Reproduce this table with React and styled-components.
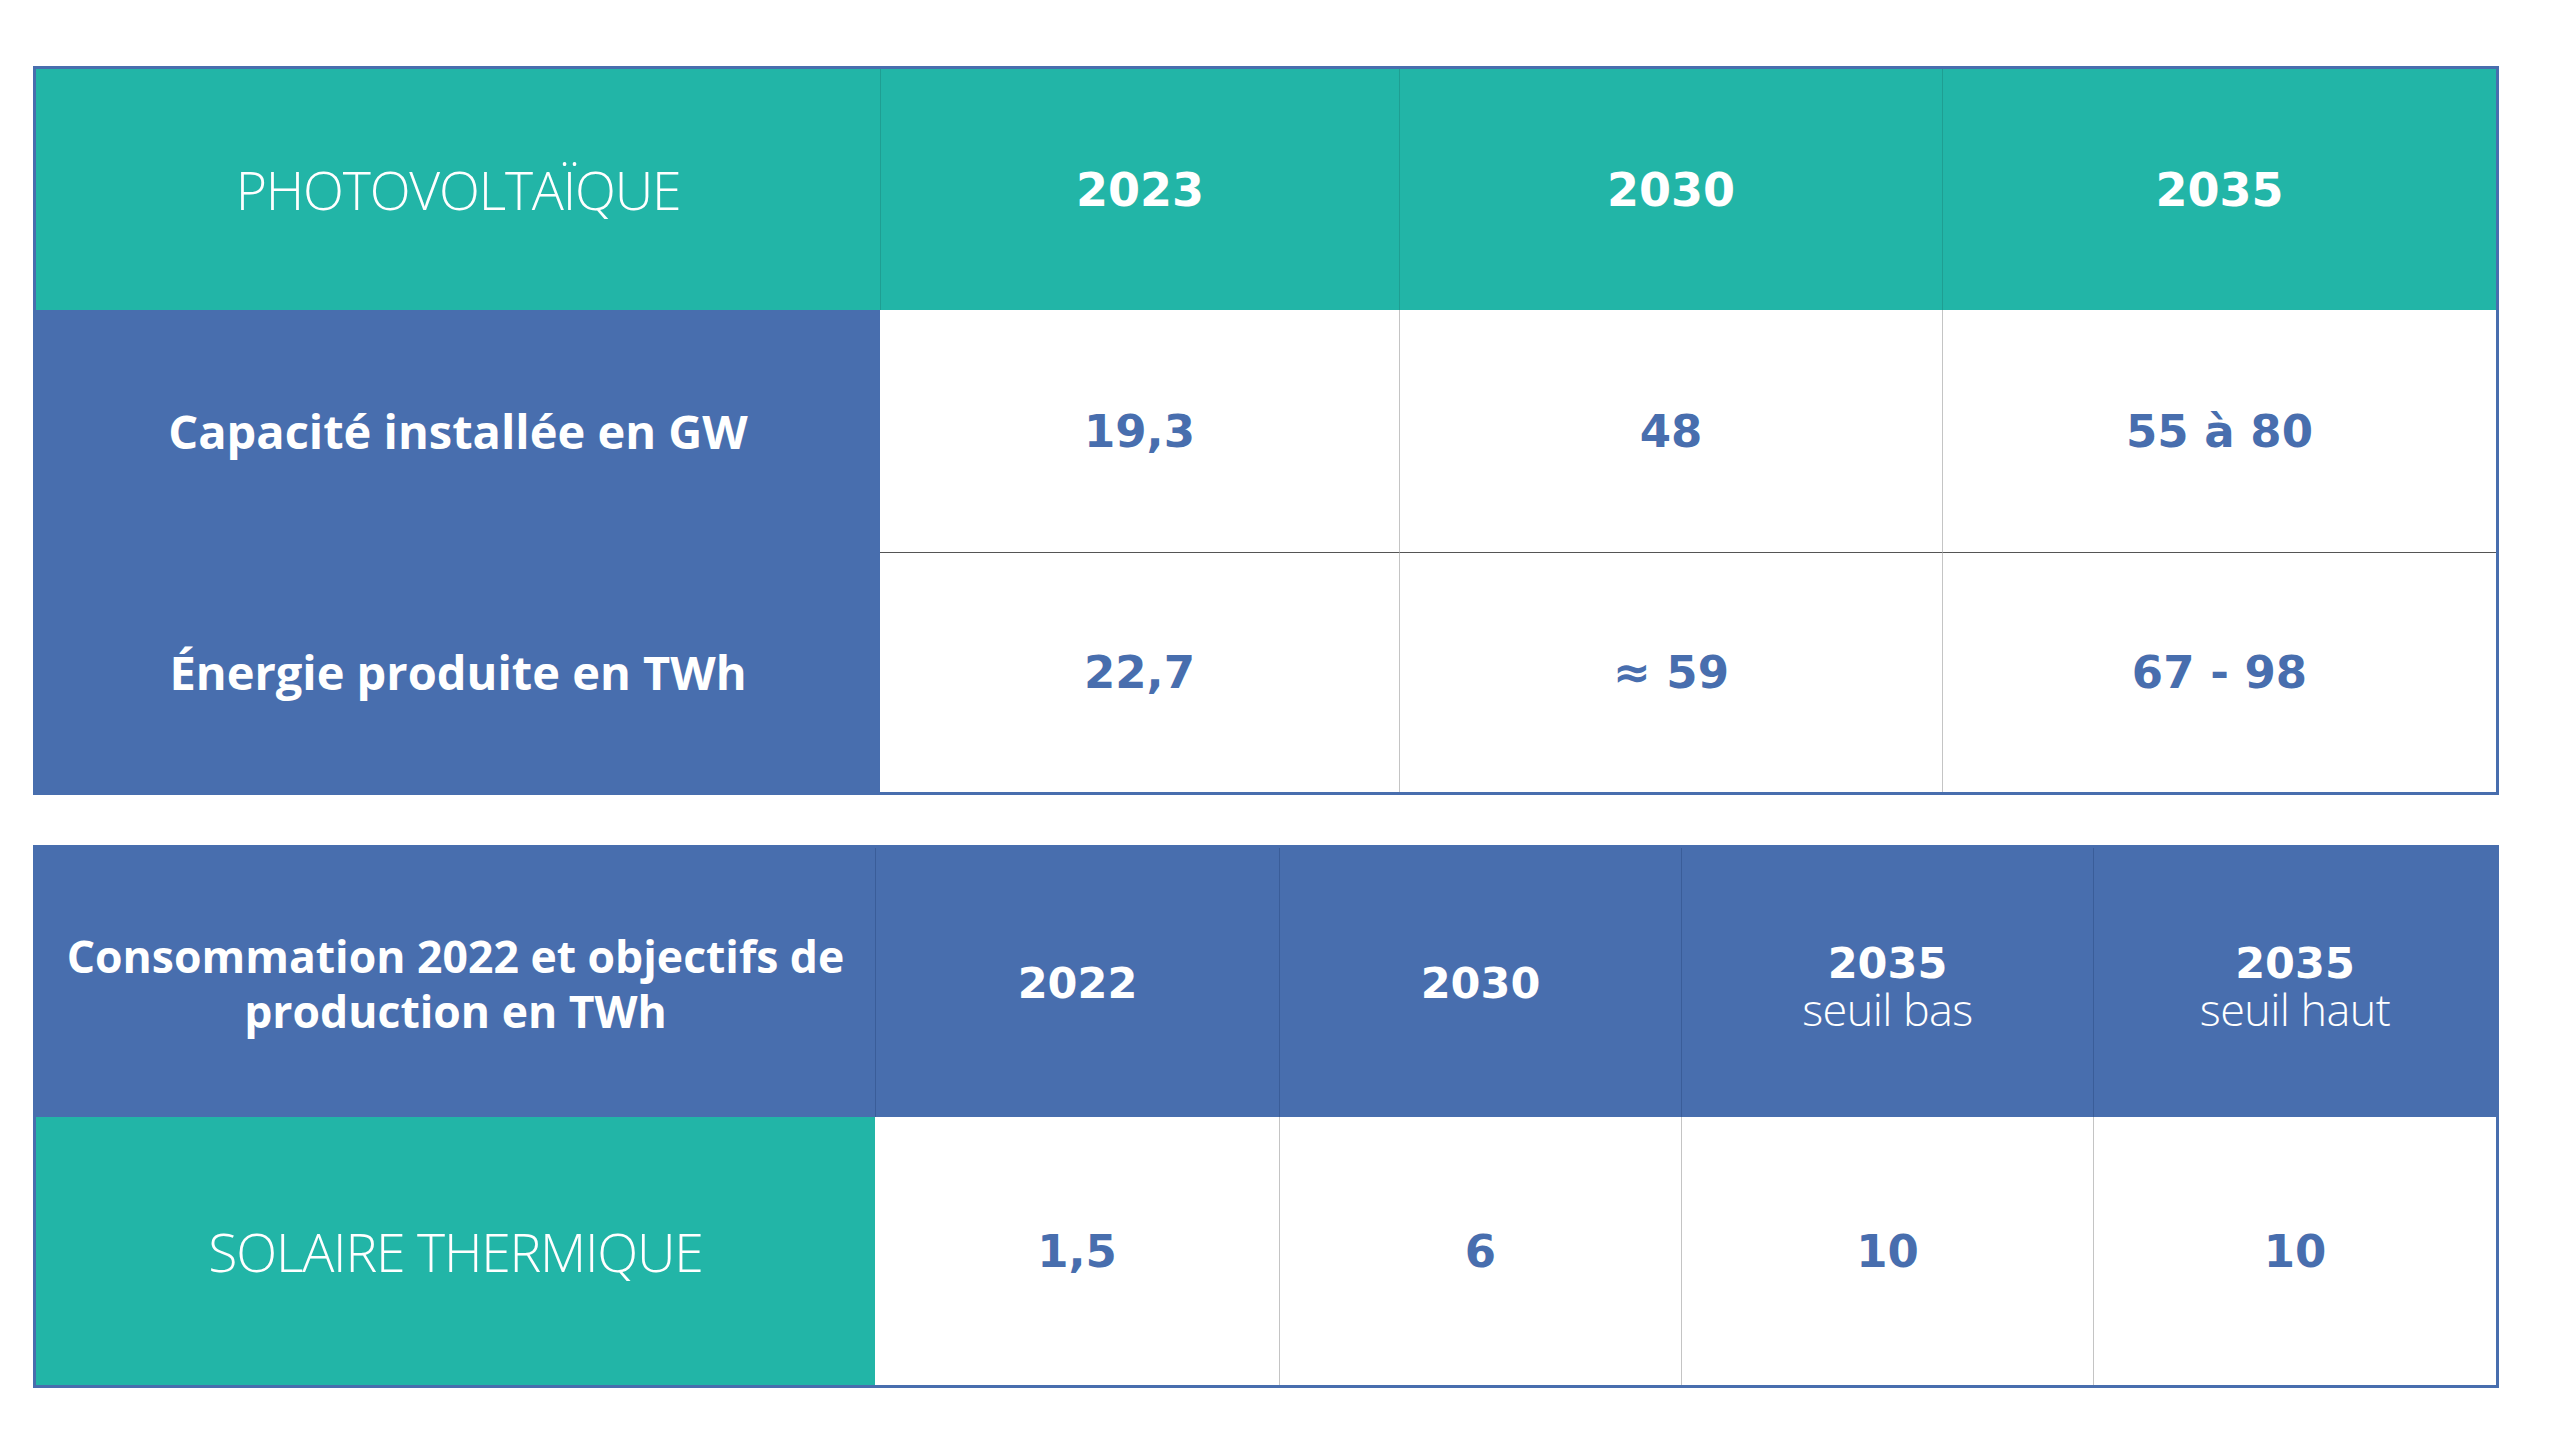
import React from 'react';
import styled, { createGlobalStyle } from 'styled-components';

const BLUE = '#486eae';
const TEAL = '#22b5a7';

const GlobalStyle = createGlobalStyle`
  html, body {
    margin: 0;
    padding: 0;
    background: #fff;
  }
  body {
    font-family: "Open Sans", "Liberation Sans", sans-serif;
  }
`;

const Page = styled.div`
  width: 2560px;
  height: 1433px;
  box-sizing: border-box;
  padding: 66px 61px 0 33px;
  display: flex;
  flex-direction: column;
  gap: 50px;
`;

const Table = styled.div`
  display: grid;
  grid-template-columns: ${p => p.$cols};
  grid-template-rows: ${p => p.$rows};
  border: 3px solid ${BLUE};
  box-sizing: border-box;
  width: 2466px;
`;

const Cell = styled.div`
  display: flex;
  flex-direction: column;
  align-items: center;
  justify-content: center;
  text-align: center;
  box-sizing: border-box;
  background: ${p => p.$bg || '#fff'};
  border-left: ${p => (p.$divider ? `1px solid ${p.$divider}` : 'none')};
  border-top: ${p => (p.$rule ? `1px solid ${p.$rule}` : 'none')};
`;

const Label = styled.div`
  color: #fff;
  font-weight: 700;
  font-size: ${p => p.$size || 47}px;
  line-height: 55px;
`;

const Title = styled.div`
  color: #fff;
  font-weight: 300;
  font-size: 53.5px;
  letter-spacing: -1.2px;
`;

const Year = styled.div`
  color: #fff;
  font-family: "DejaVu Sans", "Open Sans", sans-serif;
  font-weight: 700;
  font-size: ${p => p.$size || 46}px;
  line-height: 52px;
`;

const Sub = styled.div`
  color: #fff;
  font-weight: 300;
  font-size: 45px;
  letter-spacing: -0.6px;
  line-height: 40px;
`;

const Value = styled.div`
  color: ${BLUE};
  font-family: "DejaVu Sans", "Open Sans", sans-serif;
  font-weight: 700;
  font-size: 45px;
`;

const pv = [
  ['19,3', '48', '55 à 80'],
  ['22,7', '≈ 59', '67 - 98'],
];

const thermal = ['1,5', '6', '10', '10'];

export default function App() {
  return (
    <Page>
      <GlobalStyle />
      <Table $cols="844fr 519fr 543fr 554fr" $rows="241px 242px 240px">
        <Cell $bg={TEAL}>
          <Title>PHOTOVOLTAÏQUE</Title>
        </Cell>
        {['2023', '2030', '2035'].map(y => (
          <Cell key={y} $bg={TEAL} $divider="#1f9e92">
            <Year>{y}</Year>
          </Cell>
        ))}

        <Cell $bg={BLUE}>
          <Label>Capacité installée en GW</Label>
        </Cell>
        {pv[0].map((v, i) => (
          <Cell key={i} $divider={i ? '#c4c4c4' : null}>
            <Value>{v}</Value>
          </Cell>
        ))}

        <Cell $bg={BLUE}>
          <Label>Énergie produite en TWh</Label>
        </Cell>
        {pv[1].map((v, i) => (
          <Cell key={i} $divider={i ? '#c4c4c4' : null} $rule="#555">
            <Value>{v}</Value>
          </Cell>
        ))}
      </Table>

      <Table $cols="839fr 404fr 402fr 412fr 403fr" $rows="269px 268px">
        <Cell $bg={BLUE}>
          <Label $size={44.5}>
            Consommation 2022 et objectifs de
            <br />
            production en TWh
          </Label>
        </Cell>
        <Cell $bg={BLUE} $divider="#3a5d99">
          <Year $size={43}>2022</Year>
        </Cell>
        <Cell $bg={BLUE} $divider="#3a5d99">
          <Year $size={43}>2030</Year>
        </Cell>
        <Cell $bg={BLUE} $divider="#3a5d99">
          <Year $size={43}>2035</Year>
          <Sub>seuil bas</Sub>
        </Cell>
        <Cell $bg={BLUE} $divider="#3a5d99">
          <Year $size={43}>2035</Year>
          <Sub>seuil haut</Sub>
        </Cell>

        <Cell $bg={TEAL}>
          <Title>SOLAIRE THERMIQUE</Title>
        </Cell>
        {thermal.map((v, i) => (
          <Cell key={i} $divider={i ? '#c4c4c4' : null}>
            <Value>{v}</Value>
          </Cell>
        ))}
      </Table>
    </Page>
  );
}
